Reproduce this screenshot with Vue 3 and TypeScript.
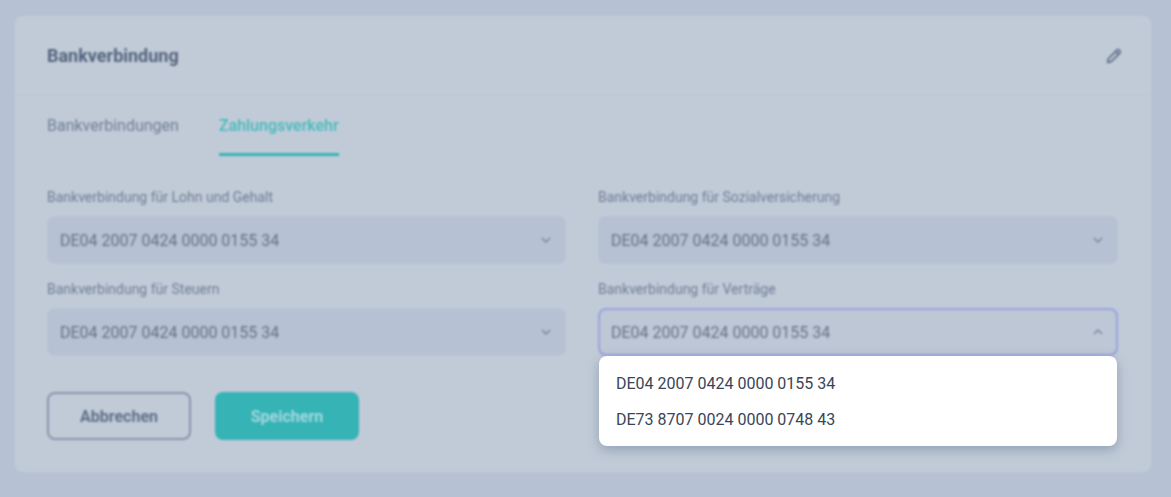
<script setup lang="ts">
interface BankField {
  label: string
  value: string
  open?: boolean
}

const fields: BankField[] = [
  { label: 'Bankverbindung für Lohn und Gehalt', value: 'DE04 2007 0424 0000 0155 34' },
  { label: 'Bankverbindung für Sozialversicherung', value: 'DE04 2007 0424 0000 0155 34' },
  { label: 'Bankverbindung für Steuern', value: 'DE04 2007 0424 0000 0155 34' },
  { label: 'Bankverbindung für Verträge', value: 'DE04 2007 0424 0000 0155 34', open: true }
]

const options = ['DE04 2007 0424 0000 0155 34', 'DE73 8707 0024 0000 0748 43']
</script>

<template>
  <div class="page">
    <div class="backdrop">
      <section class="card">
        <header class="card-head">
          <h2>Bankverbindung</h2>
          <svg class="pencil" width="18" height="18" viewBox="0 0 18 18" fill="none">
            <path d="M2.6 15.4l.7-3.6 8.6-8.6a1.7 1.7 0 0 1 2.4 0l.5.5a1.7 1.7 0 0 1 0 2.4l-8.6 8.6-3.6.7z" stroke="#5f6e87" stroke-width="1.7" stroke-linejoin="round" />
            <path d="M10.6 4.5l2.9 2.9" stroke="#5f6e87" stroke-width="1.7" />
          </svg>
        </header>
        <div class="card-body">
          <nav class="tabs">
            <span class="tab">Bankverbindungen</span>
            <span class="tab active">Zahlungsverkehr</span>
          </nav>
          <div class="form-grid">
            <div v-for="f in fields" :key="f.label" class="field">
              <label>{{ f.label }}</label>
              <div class="select" :class="{ open: f.open }">
                <span>{{ f.value }}</span>
                <svg width="10" height="6" viewBox="0 0 10 6" fill="none">
                  <path :d="f.open ? 'M1 5l4-4 4 4' : 'M1 1l4 4 4-4'" stroke="#76849a" stroke-width="1.4" />
                </svg>
              </div>
            </div>
          </div>
          <div class="actions">
            <button class="btn ghost">Abbrechen</button>
            <button class="btn primary">Speichern</button>
          </div>
        </div>
      </section>
    </div>
    <ul class="menu">
      <li v-for="o in options" :key="o">{{ o }}</li>
    </ul>
  </div>
</template>

<style>
html, body {
  margin: 0;
  background: #b6c2d3;
}
</style>

<style scoped>
.page {
  position: relative;
  width: 1171px;
  height: 497px;
  overflow: hidden;
  background: #b6c2d3;
  font-family: Roboto, "Liberation Sans", sans-serif;
}

.backdrop {
  height: 100%;
  box-sizing: border-box;
  padding: 16px 20px 25px 15px;
  filter: blur(0.8px);
}

.card {
  height: 456px;
  box-sizing: border-box;
  background: #c1cbd8;
  border-radius: 8px;
}

.card-head {
  height: 80px;
  box-sizing: border-box;
  display: flex;
  align-items: center;
  justify-content: space-between;
  padding: 0 28px 0 32px;
  border-bottom: 1px solid #bbc5d3;
}

.card-head h2 {
  margin: 0;
  font-size: 18px;
  font-weight: 700;
  color: #54647e;
}

.card-body {
  padding: 0 33px 0 32px;
}

.tabs {
  display: flex;
  gap: 40px;
  height: 60px;
}

.tab {
  box-sizing: border-box;
  height: 60px;
  padding-top: 20px;
  font-size: 16px;
  color: #6f7e95;
}

.tab.active {
  font-weight: 500;
  color: #45baba;
  border-bottom: 3px solid #35b3b5;
}

.form-grid {
  display: grid;
  grid-template-columns: 519px 520px;
  column-gap: 32px;
  row-gap: 15px;
  margin-top: 31px;
}

.field label {
  display: block;
  height: 29px;
  font-size: 14px;
  line-height: 20px;
  color: #6f7e95;
}

.select {
  height: 48px;
  box-sizing: border-box;
  display: flex;
  align-items: center;
  justify-content: space-between;
  padding: 0 15px 0 13px;
  background: #b6c2d3;
  border-radius: 8px;
  font-size: 16px;
  color: #667283;
}

.select.open {
  background: #bdc7d6;
  border: 2px solid #98a3e0;
  padding: 0 13px 0 11px;
}

.actions {
  display: flex;
  gap: 24px;
  margin-top: 36px;
}

.btn {
  width: 144px;
  height: 48px;
  box-sizing: border-box;
  border-radius: 8px;
  font-family: inherit;
  font-size: 16px;
  font-weight: 700;
}

.ghost {
  background: transparent;
  border: 2px solid #8694aa;
  color: #5f6f88;
}

.primary {
  background: #35b3b5;
  border: none;
  color: #a6d9df;
}

.menu {
  position: absolute;
  left: 599px;
  top: 356px;
  width: 518px;
  margin: 0;
  padding: 10px 0 8px;
  box-sizing: border-box;
  list-style: none;
  background: #fff;
  border-radius: 8px;
  box-shadow: 0 4px 12px rgba(90, 110, 140, 0.45);
}

.menu li {
  height: 36px;
  line-height: 36px;
  padding-left: 17px;
  font-size: 16px;
  color: #3a4556;
}
</style>
